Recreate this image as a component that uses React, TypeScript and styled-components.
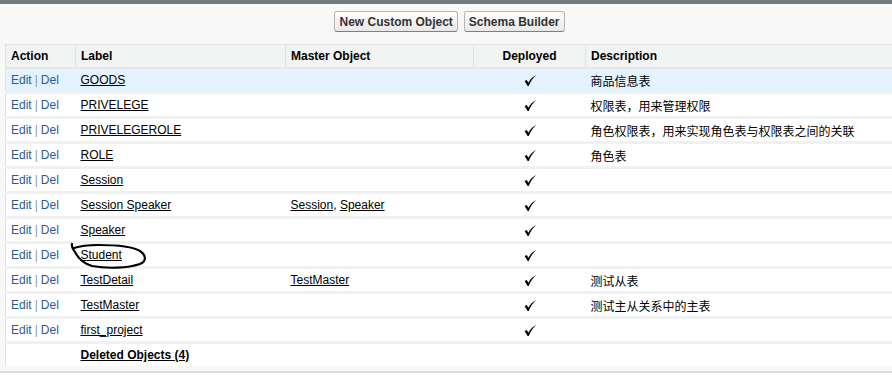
import React from 'react';
import styled, { createGlobalStyle } from 'styled-components';

const GlobalStyle = createGlobalStyle`
  html, body {
    margin: 0;
    padding: 0;
    background: #ffffff;
  }
  body {
    font-family: Arial, "Liberation Sans", "Noto Sans CJK SC", sans-serif;
    font-size: 12px;
    color: #000;
  }
`;

const Page = styled.div`
  width: 892px;
  height: 375px;
  overflow: hidden;
  border-top: 4px solid #747c80;
  box-sizing: border-box;
`;

const Panel = styled.div`
  background: #f8f8f8;
  padding: 0 0 5px 5px;
  border-bottom: 2px solid #dcdcdc;
`;

const Toolbar = styled.div`
  display: flex;
  justify-content: center;
  gap: 6px;
  padding: 7px 0 12px 0;
  margin-left: 2px;
`;

const Button = styled.button`
  font-family: Arial, "Liberation Sans", sans-serif;
  font-size: 12px;
  font-weight: bold;
  color: #333;
  height: 21px;
  padding: 0 4px;
  border: 1px solid #b5b5b5;
  border-bottom-color: #7f7f7f;
  border-radius: 3px;
  background: linear-gradient(#ffffff, #e8e8e8);
  cursor: pointer;
`;

const Table = styled.table`
  border-collapse: collapse;
  width: 900px;
  table-layout: fixed;
  background: #ffffff;
  border-left: 1px solid #e0e3e5;
  border-top: 1px solid #e0e3e5;
`;

const Th = styled.th<{ $center?: boolean; $w?: number }>`
  width: ${(p) => (p.$w ? `${p.$w - 11}px` : 'auto')};
  background: #f2f3f3;
  border-bottom: 2px solid #e6e6e6;
  border-left: 1px solid #e0e3e5;
  font-weight: bold;
  font-size: 12px;
  text-align: ${(p) => (p.$center ? 'center' : 'left')};
  padding: 0 5px;
  height: 22px;
  &:first-child {
    border-left: none;
  }
`;

const Tr = styled.tr<{ $hl?: boolean }>`
  background: ${(p) => (p.$hl ? '#e3f3ff' : '#ffffff')};
`;

const Td = styled.td<{ $center?: boolean }>`
  height: 22px;
  padding: 0 5px;
  border-bottom: 3px solid #f0f1f1;
  text-align: ${(p) => (p.$center ? 'center' : 'left')};
  vertical-align: middle;
  white-space: nowrap;
  font-family: Arial, "Liberation Sans", "Noto Sans CJK SC", sans-serif;
`;

const LastTd = styled(Td)`
  border-bottom: none;
  height: 22px;
`;

const ActionLink = styled.a`
  color: #2a5b8f;
  text-decoration: none;
`;

const Pipe = styled.span`
  color: #8a9aa8;
  margin: 0 3px;
`;

const ItemLink = styled.a`
  color: #000;
  text-decoration: underline;
  position: relative;
`;

const BoldLink = styled(ItemLink)`
  font-weight: bold;
`;

const Circle = styled.svg`
  position: absolute;
  left: -11px;
  top: -5px;
  width: 76px;
  height: 26px;
  pointer-events: none;
  overflow: visible;
`;

const Check = () => (
  <svg width="14" height="13" viewBox="0 0 13 12" style={{ verticalAlign: 'middle' }}>
    <path d="M1.5 6.5 L3.5 5.5 L5 8 C7 4.5 9.5 1.8 12.5 0.8 C9.5 3 7.2 6.5 5.3 11 L4.3 11 Z" fill="#000" />
  </svg>
);

type Row = {
  label: string;
  master?: string[];
  desc?: string;
};

const rows: Row[] = [
  { label: 'GOODS', desc: '商品信息表' },
  { label: 'PRIVELEGE', desc: '权限表，用来管理权限' },
  { label: 'PRIVELEGEROLE', desc: '角色权限表，用来实现角色表与权限表之间的关联' },
  { label: 'ROLE', desc: '角色表' },
  { label: 'Session' },
  { label: 'Session Speaker', master: ['Session', 'Speaker'] },
  { label: 'Speaker' },
  { label: 'Student' },
  { label: 'TestDetail', master: ['TestMaster'], desc: '测试从表' },
  { label: 'TestMaster', desc: '测试主从关系中的主表' },
  { label: 'first_project' },
];

export default function App() {
  return (
    <Page>
      <GlobalStyle />
      <Panel>
        <Toolbar>
          <Button>New Custom Object</Button>
          <Button>Schema Builder</Button>
        </Toolbar>
        <Table>
          <thead>
            <tr>
              <Th $w={70}>Action</Th>
              <Th $w={210}>Label</Th>
              <Th $w={188}>Master Object</Th>
              <Th $w={112} $center>
                Deployed
              </Th>
              <Th>Description</Th>
            </tr>
          </thead>
          <tbody>
            {rows.map((r, i) => (
              <Tr key={r.label} $hl={i === 0}>
                <Td>
                  <ActionLink href="#">Edit</ActionLink>
                  <Pipe>|</Pipe>
                  <ActionLink href="#">Del</ActionLink>
                </Td>
                <Td>
                  <ItemLink href="#">
                    {r.label}
                    {r.label === 'Student' && (
                      <Circle viewBox="0 0 76 26">
                        <path
                          d="M2 1 C1 4 3 6 5 9 C8 15 12 20 22 23 C38 26 58 25 70 21 C77 18 76 12 70 8 C62 3 44 2 28 2 C18 2 10 3 4 5"
                          fill="none"
                          stroke="#000"
                          strokeWidth="2.2"
                          strokeLinecap="round"
                        />
                      </Circle>
                    )}
                  </ItemLink>
                </Td>
                <Td>
                  {r.master?.map((m, j) => (
                    <React.Fragment key={m}>
                      {j > 0 && ', '}
                      <ItemLink href="#">{m}</ItemLink>
                    </React.Fragment>
                  ))}
                </Td>
                <Td $center>
                  <Check />
                </Td>
                <Td>{r.desc}</Td>
              </Tr>
            ))}
            <tr>
              <LastTd />
              <LastTd>
                <BoldLink href="#">Deleted Objects (4)</BoldLink>
              </LastTd>
              <LastTd />
              <LastTd />
              <LastTd />
            </tr>
          </tbody>
        </Table>
      </Panel>
    </Page>
  );
}
